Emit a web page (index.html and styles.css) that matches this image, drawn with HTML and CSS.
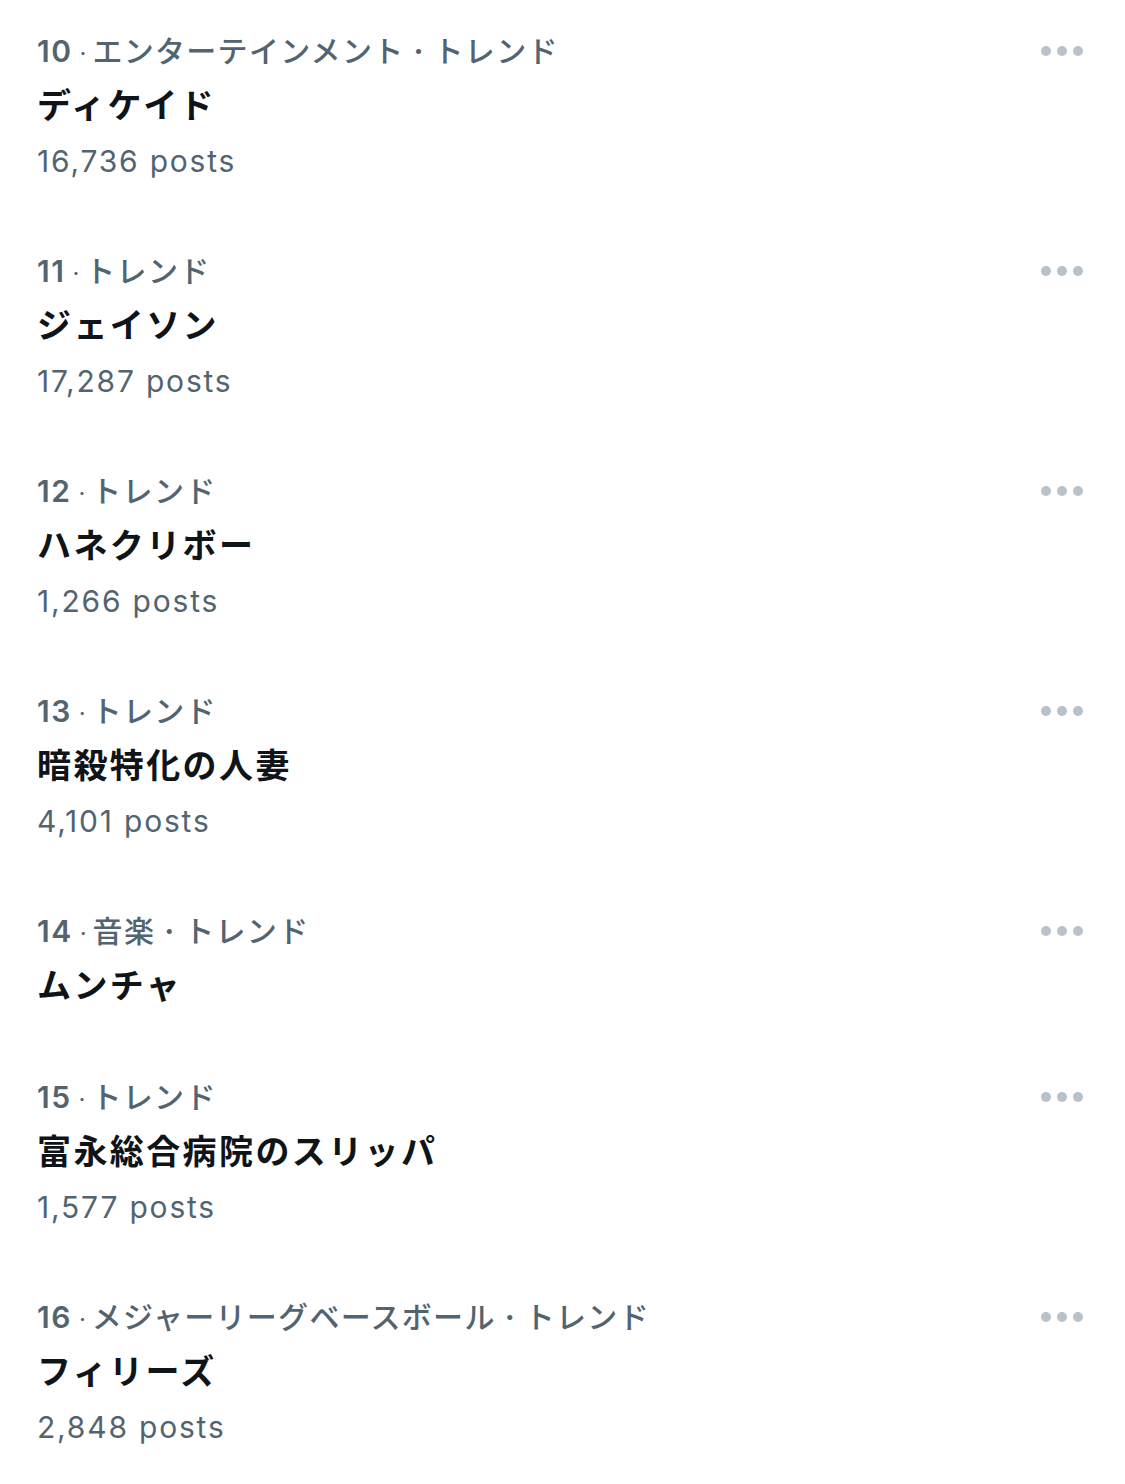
FILE: index.html
```html
<!DOCTYPE html>
<html lang="ja">
<head>
<meta charset="utf-8">
<link rel="stylesheet" href="styles.css">
</head>
<body>
<div class="list">
  <div class="item">
    <div class="main">
      <div class="meta"><span class="rank">10</span><span class="sep1">·</span>エンターテインメント<span class="sep2">·</span>トレンド</div>
      <div class="title">ディケイド</div>
      <div class="count">16,736 posts</div>
    </div>
    <div class="more"><span></span><span></span><span></span></div>
  </div>
  <div class="item">
    <div class="main">
      <div class="meta"><span class="rank">11</span><span class="sep1">·</span>トレンド</div>
      <div class="title">ジェイソン</div>
      <div class="count">17,287 posts</div>
    </div>
    <div class="more"><span></span><span></span><span></span></div>
  </div>
  <div class="item">
    <div class="main">
      <div class="meta"><span class="rank">12</span><span class="sep1">·</span>トレンド</div>
      <div class="title">ハネクリボー</div>
      <div class="count">1,266 posts</div>
    </div>
    <div class="more"><span></span><span></span><span></span></div>
  </div>
  <div class="item">
    <div class="main">
      <div class="meta"><span class="rank">13</span><span class="sep1">·</span>トレンド</div>
      <div class="title">暗殺特化の人妻</div>
      <div class="count">4,101 posts</div>
    </div>
    <div class="more"><span></span><span></span><span></span></div>
  </div>
  <div class="item">
    <div class="main">
      <div class="meta"><span class="rank">14</span><span class="sep1">·</span>音楽<span class="sep2">·</span>トレンド</div>
      <div class="title">ムンチャ</div>
    </div>
    <div class="more"><span></span><span></span><span></span></div>
  </div>
  <div class="item">
    <div class="main">
      <div class="meta"><span class="rank">15</span><span class="sep1">·</span>トレンド</div>
      <div class="title">富永総合病院のスリッパ</div>
      <div class="count">1,577 posts</div>
    </div>
    <div class="more"><span></span><span></span><span></span></div>
  </div>
  <div class="item">
    <div class="main">
      <div class="meta"><span class="rank">16</span><span class="sep1">·</span>メジャーリーグベースボール<span class="sep2">·</span>トレンド</div>
      <div class="title">フィリーズ</div>
      <div class="count">2,848 posts</div>
    </div>
    <div class="more"><span></span><span></span><span></span></div>
  </div>
</div>
</body>
</html>
```
FILE: styles.css
```css
html, body {
  margin: 0;
  padding: 0;
  background: #ffffff;
}
body {
  font-family: Inter, "Noto Sans CJK JP", sans-serif;
  -webkit-font-smoothing: antialiased;
}
.list {
  display: flex;
  flex-direction: column;
}
.item {
  display: flex;
  justify-content: space-between;
  align-items: flex-start;
  padding: 31px 42px 39px 37px;
}
.main {
  display: flex;
  flex-direction: column;
}
.meta {
  font-size: 30px;
  line-height: 40px;
  height: 40px;
  color: #536471;
  font-weight: 500;
  letter-spacing: 1.3px;
  white-space: nowrap;
}
.rank {
  font-weight: 600;
  letter-spacing: 1.5px;
}
.sep1 {
  font-weight: 400;
  font-size: 24px;
  letter-spacing: 0;
  margin: 0 6px 0 7px;
}
.sep2 {
  font-weight: 700;
  letter-spacing: 0;
  margin: 0 10px 0 9px;
}
.title {
  margin-top: 14px;
  font-size: 34px;
  line-height: 42px;
  height: 42px;
  font-weight: 700;
  letter-spacing: 2.4px;
  color: #0f1419;
  white-space: nowrap;
}
.count {
  margin-top: 14px;
  font-size: 30px;
  line-height: 40px;
  height: 40px;
  color: #536471;
  letter-spacing: 1.8px;
  white-space: nowrap;
}
.more {
  display: flex;
  gap: 6px;
  height: 40px;
  align-items: center;
}
.more span {
  width: 10px;
  height: 10px;
  border-radius: 50%;
  background: #b9c2ca;
}
```
